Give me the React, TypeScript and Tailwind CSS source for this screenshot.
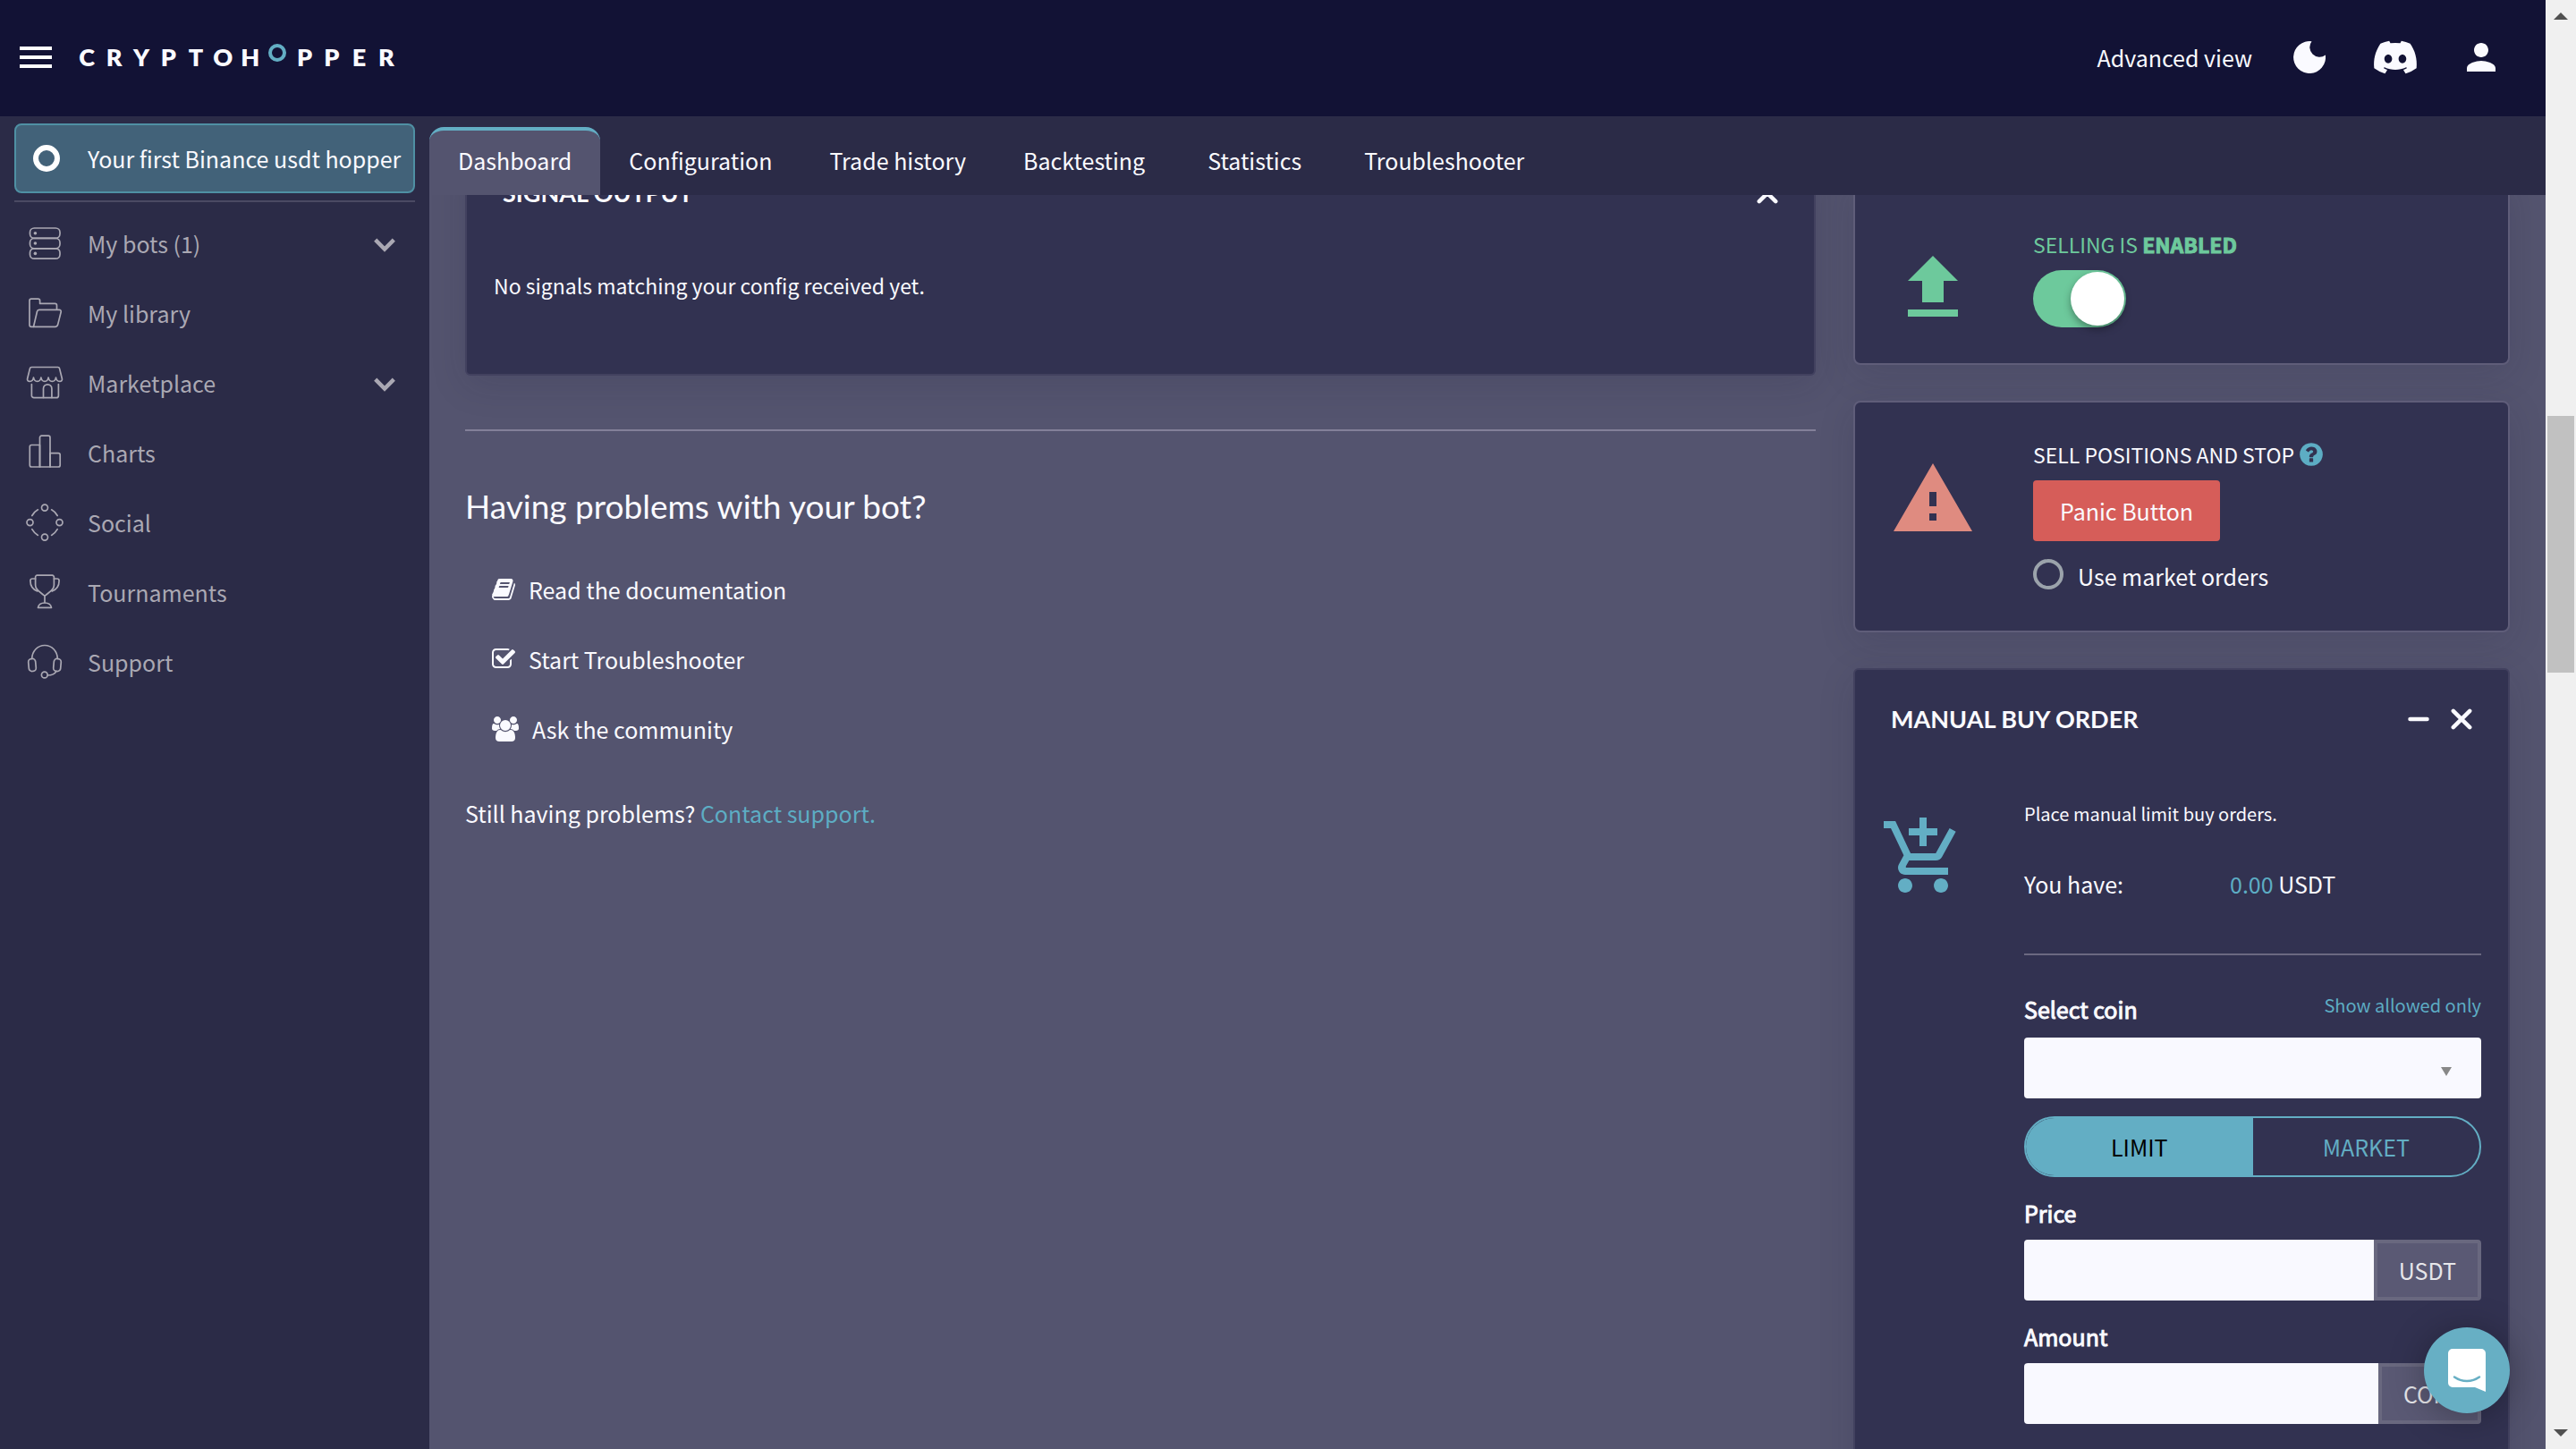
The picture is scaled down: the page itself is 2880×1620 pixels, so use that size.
import React, { useState } from "react";
import { MdPerson, MdFileUpload, MdWarning, MdAddShoppingCart } from "react-icons/md";
import { FaDiscord } from "react-icons/fa";

const line = {
  viewBox: "0 0 42 42",
  fill: "none",
  stroke: "currentColor",
  strokeWidth: 1.7,
  strokeLinecap: "round",
  strokeLinejoin: "round",
  className: "size-[42px] shrink-0",
  "aria-hidden": true,
} as const;

const BotsIcon = () => (
  <svg {...line}>
    <rect x="4.5" y="4" width="33.5" height="11.4" rx="4.8" />
    <rect x="4.5" y="15.4" width="33.5" height="11.4" rx="4.8" />
    <rect x="4.5" y="26.8" width="33.5" height="11.4" rx="4.8" />
    <g fill="currentColor" stroke="none">
      <circle cx="10.4" cy="9.7" r="1.8" />
      <circle cx="10.4" cy="21" r="1.8" />
      <circle cx="10.4" cy="32.4" r="1.8" />
    </g>
  </svg>
);
const LibraryIcon = () => (
  <svg {...line}>
    <path d="M8.5 36.3H6a2 2 0 0 1-2-2V7.2a2 2 0 0 1 2-2h7.6a2 2 0 0 1 2 2v3.2h16.9a2 2 0 0 1 2 2v4.8" />
    <path d="M8.5 36.3l4-17a2.4 2.4 0 0 1 2.3-2h22.4a2 2 0 0 1 2 2.5l-3.6 14.3a3 3 0 0 1-2.9 2.2H8.5z" />
  </svg>
);
const MarketIcon = () => (
  <svg {...line}>
    <path d="M6.4 3.5h29.2a2 2 0 0 1 2 1.6l2.8 11.4c.4 1.700-.9 2.900-2.600 2.900-2.600 0-4-1.600-4.300-4.400-.4 2.800-1.900 4.400-4.200 4.400s-3.800-1.600-4.200-4.400c-.4 2.800-1.800 4.400-4.100 4.400s-3.700-1.600-4.100-4.400c-.4 2.800-1.900 4.400-4.200 4.400s-3.800-1.600-4.200-4.400c-.3 2.800-1.700 4.400-4.300 4.400-1.700 0-3-1.200-2.600-2.900L4.400 5.100a2 2 0 0 1 2-1.600z" />
    <path d="M6.400 22.500v12.700a2.500 2.500 0 0 0 2.500 2.500h25a2.500 2.500 0 0 0 2.500-2.500V22.500" />
    <path d="M19.500 37.500V27.500a4.700 4.700 0 0 1 9.400 0v10" />
  </svg>
);
const ChartsIcon = () => (
  <svg {...line}>
    <path d="M15.500 37V12.500H6.300a2 2 0 0 0-2 2V35a2 2 0 0 0 2 2h9.200z" />
    <path d="M15.500 37V4.200a2 2 0 0 1 2-2H25a2 2 0 0 1 2 2V37H15.500z" />
    <path d="M27 37V21.700h9.200a2 2 0 0 1 2 2V35a2 2 0 0 1-2 2H27z" />
  </svg>
);
const SocialIcon = () => (
  <svg {...line}>
    <circle cx="21" cy="4.600" r="3.500" />
    <circle cx="21" cy="37.600" r="3.500" />
    <circle cx="4.500" cy="21.100" r="3.500" />
    <circle cx="37.500" cy="21.100" r="3.500" />
    <path d="M6.800 13.500a17 17 0 0 1 6.600-6.700M28.600 6.800a17 17 0 0 1 6.600 6.700M35.200 28.700a17 17 0 0 1-6.600 6.700M13.400 35.400a17 17 0 0 1-6.600-6.700" />
  </svg>
);
const TrophyIcon = () => (
  <svg {...line}>
    <path d="M12.600 2.200h16.800a2 2 0 0 1 2 2v9c0 5.400-5.600 8-9.200 11.100a1.800 1.800 0 0 1-2.400 0C16.200 21.200 10.600 18.600 10.600 13.200v-9a2 2 0 0 1 2-2z" />
    <path d="M10.600 6H7.200c-1.500 0-2.300.7-2.300 2.200 0 5.800 2.600 9.700 7.900 11.800M31.400 6h3.400c1.500 0 2.300.7 2.300 2.200 0 5.800-2.600 9.700-7.900 11.800M21 25v7.500" />
    <path d="M13.500 38.300h15c-.6-3.700-3.700-5.300-7.500-5.300s-6.900 1.600-7.500 5.300z" />
  </svg>
);
const HeadsetIcon = () => (
  <svg {...line}>
    <path d="M6.600 17.500C7 8.800 13 2.500 21 2.500s14 6.300 14.400 15" />
    <rect x="3" y="17.500" width="8" height="14" rx="3.500" transform="rotate(-5 7 24.500)" />
    <rect x="31" y="17.500" width="8" height="14" rx="3.500" transform="rotate(5 35 24.500)" />
    <circle cx="20.800" cy="35.500" r="3.400" />
    <path d="M24.200 36c5 0 8.300-1.800 10-4.600" />
  </svg>
);

const BookIcon = () => (
  <svg viewBox="0 0 1792 1792" fill="currentColor" className="size-7" aria-hidden>
    <path d="M1703 478q40 57 18 129l-275 906q-19 64-76.5 107.5t-122.5 43.5h-923q-77 0-148.5-53.5t-99.5-131.5q-24-67-2-127 0-4 3-27t4-37q1-8-3-21.5t-3-19.5q2-11 8-21t16.5-23.5 16.5-23.5q23-38 45-91.5t30-91.5q3-10 .5-30t-.5-28q3-11 17-28t17-23q21-36 42-92t25-90q1-9-2.500-32t.5-28q4-13 22-30.500t22-22.500q19-26 42.500-84.500t27.500-96.500q1-8-3-25.500t-2-26.500q2-8 9-18t18-23 17-21q8-12 16.500-30.500t15-35 16-36 19.500-32 26.500-23.500 36-11.500 47.500 5.500l-1 3q38-9 51-9h761q74 0 114 56t18 130l-274 906q-36 119-71.500 153.500t-128.500 34.500h-869q-27 0-38 15-11 16-1 43 24 70 144 70h923q29 0 56-15.500t35-41.500l300-987q7-22 5-57 38 15 59 43zm-1064 2q-4 13 2 22.500t20 9.500h608q13 0 25.500-9.500t16.500-22.500l21-64q4-13-2-22.500t-20-9.500h-608q-13 0-25.500 9.500t-16.500 22.500zm-83 256q-4 13 2 22.500t20 9.500h608q13 0 25.500-9.500t16.500-22.500l21-64q4-13-2-22.500t-20-9.500h-608q-13 0-25.500 9.500t-16.500 22.500z" />
  </svg>
);
const CheckIcon = () => (
  <svg viewBox="0 0 1792 1792" fill="currentColor" className="size-7" aria-hidden>
    <path d="M1472 930v318q0 119-84.500 203.500t-203.500 84.500h-832q-119 0-203.500-84.500t-84.500-203.500v-832q0-119 84.500-203.500t203.500-84.500h832q63 0 117 25 15 7 18 23 3 17-9 29l-49 49q-10 10-23 10-3 0-9-2-23-6-45-6h-832q-66 0-113 47t-47 113v832q0 66 47 113t113 47h832q66 0 113-47t47-113v-254q0-13 9-22l64-64q10-10 23-10 6 0 12 3 20 8 20 29zm231-489l-814 814q-24 24-57 24t-57-24l-430-430q-24-24-24-57t24-57l110-110q24-24 57-24t57 24l263 263 647-647q24-24 57-24t57 24l110 110q24 24 24 57t-24 57z" />
  </svg>
);
const UsersIcon = () => (
  <svg viewBox="0 0 1920 1792" fill="currentColor" className="h-7 w-8" aria-hidden>
    <path d="M593 896q-162 5-265 128h-134q-82 0-138-40.500t-56-118.500q0-353 124-353 6 0 43.500 21t97.500 42.500 119 21.500q67 0 133-23-5 37-5 66 0 139 81 256zm1071 637q0 120-73 189.500t-194 69.500h-874q-121 0-194-69.500t-73-189.500q0-53 3.500-103.500t14-109 26.500-108.500 43-97.500 62-81 85.500-53.500 111.500-20q10 0 43 21.500t73 48 107 48 135 21.500 135-21.500 107-48 73-48 43-21.500q61 0 111.500 20t85.500 53.500 62 81 43 97.500 26.500 108.500 14 109 3.500 103.500zm-1024-1277q0 106-75 181t-181 75-181-75-75-181 75-181 181-75 181 75 75 181zm704 384q0 159-112.500 271.500t-271.500 112.500-271.500-112.500-112.500-271.500 112.500-271.500 271.500-112.500 271.500 112.500 112.500 271.500zm576 225q0 78-56 118.500t-138 40.500h-134q-103-123-265-128 81-117 81-256 0-29-5-66 66 23 133 23 59 0 119-21.500t97.500-42.500 43.500-21q124 0 124 353zm-128-609q0 106-75 181t-181 75-181-75-75-181 75-181 181-75 181 75 75 181z" />
  </svg>
);
const HelpIcon = () => (
  <svg viewBox="0 0 1792 1792" fill="currentColor" className="size-[30px]" aria-hidden>
    <path d="M1024 1376v-192q0-14-9-23t-23-9h-192q-14 0-23 9t-9 23v192q0 14 9 23t23 9h192q14 0 23-9t9-23zm256-672q0-88-55.500-163t-138.500-116-170-41q-243 0-371 213-15 24 8 42l132 100q7 6 19 6 16 0 25-12 53-68 86-92 34-24 86-24 48 0 85.500 26t37.500 59q0 38-20 61t-68 45q-63 28-115.500 86.500t-52.500 125.500v36q0 14 9 23t23 9h192q14 0 23-9t9-23q0-19 21.500-49.500t54.500-49.500q32-18 49-28.500t46-35 44.500-48 28-60.500 12.500-81zm384 192q0 209-103 385.500t-279.500 279.500-385.500 103-385.500-103-279.500-279.500-103-385.500 103-385.500 279.500-279.500 385.500-103 385.500 103 279.500 279.500 103 385.500z" />
  </svg>
);
const Chevron = () => (
  <svg viewBox="0 0 24 16" fill="none" stroke="currentColor" strokeWidth="4.500" className="mt-1 mr-[22px] h-4 w-6" aria-hidden>
    <path d="M1.700 2.200 12 12.500 22.300 2.200" />
  </svg>
);
const CloseIcon = () => (
  <svg viewBox="0 0 24 24" stroke="currentColor" strokeWidth="4.500" strokeLinecap="round" className="size-6" aria-hidden>
    <path d="M2.800 2.800 21.200 21.200M21.200 2.800 2.800 21.200" />
  </svg>
);
const MinusIcon = () => (
  <svg viewBox="0 0 24 24" stroke="currentColor" strokeWidth="4.500" strokeLinecap="round" className="size-6" aria-hidden>
    <path d="M2.500 12H21.500" />
  </svg>
);
const MoonIcon = () => (
  <svg viewBox="0 0 36 36" fill="currentColor" className="size-9" aria-hidden>
    <path d="M20.500.2A11 11 0 0 0 35.900 15.600 18 18 0 1 1 20.500.2z" />
  </svg>
);

const nav = [
  { label: "My bots (1)", Icon: BotsIcon, more: true },
  { label: "My library", Icon: LibraryIcon },
  { label: "Marketplace", Icon: MarketIcon, more: true },
  { label: "Charts", Icon: ChartsIcon },
  { label: "Social", Icon: SocialIcon },
  { label: "Tournaments", Icon: TrophyIcon },
  { label: "Support", Icon: HeadsetIcon },
];
const tabs = ["Dashboard", "Configuration", "Trade history", "Backtesting", "Statistics", "Troubleshooter"];
const help = [
  { label: "Read the documentation", Icon: BookIcon },
  { label: "Start Troubleshooter", Icon: CheckIcon },
  { label: "Ask the community", Icon: UsersIcon },
];

function Logo() {
  return (
    <a href="#home" aria-label="Cryptohopper" className="grid w-[365px] grid-cols-12 items-center justify-items-center font-['Lato'] text-[27px] leading-9 font-extrabold">
      {"CRYPTOH".split("").map((c, i) => (
        <span key={i}>{c}</span>
      ))}
      <span className="mb-2.5 size-5 rounded-full border-4 border-[#63aec4]" />
      {"PPER".split("").map((c, i) => (
        <span key={i}>{c}</span>
      ))}
    </a>
  );
}

function Header() {
  return (
    <header className="flex h-[130px] shrink-0 items-center bg-[#121235] pr-12 pb-0.5 pl-[22px]">
      <button aria-label="Toggle menu" className="mr-6 flex w-9 flex-col gap-1.5">
        <span className="h-1 bg-white" />
        <span className="h-1 bg-white" />
        <span className="h-1 bg-white" />
      </button>
      <Logo />
      <a href="#advanced" className="ml-auto">Advanced view</a>
      <button aria-label="Dark mode" className="ml-[46px]"><MoonIcon /></button>
      <a href="#discord" aria-label="Discord" className="ml-[52px]"><FaDiscord className="size-[52px]" /></a>
      <button aria-label="Account" className="ml-[46px]"><MdPerson className="size-12" /></button>
    </header>
  );
}

function Sidebar() {
  return (
    <aside className="w-[480px] shrink-0 bg-[#2b2b47] px-4 pt-2">
      <button className="flex h-[78px] w-full items-center rounded-lg border-2 border-[#4f90a4] bg-[#426279] pl-[19px] whitespace-nowrap">
        <span className="mr-[31px] size-[30px] rounded-full border-[6px] border-white" />
        Your first Binance usdt hopper
      </button>
      <hr className="mt-2 border-t-2 border-[#4b4a63]" />
      <nav className="mt-[7px] text-[#aaa8b3]">
        {nav.map(({ label, Icon, more }) => (
          <a key={label} href={"#" + label} className="flex h-[78px] items-center pl-[13px]">
            <Icon />
            <span className="ml-[27px] flex-1">{label}</span>
            {more && <Chevron />}
          </a>
        ))}
      </nav>
    </aside>
  );
}

const card = "border-2 shadow-[0_10px_40px_rgba(30,30,60,0.14)] bg-[#323251]";
const bold = "[-webkit-text-stroke:1px_currentColor]";

function CardTitle({ children, minimise }: { children: string; minimise?: boolean }) {
  return (
    <div className="flex h-20 items-center px-10">
      <h3 className="flex-1 font-['Lato'] text-[27px] font-bold">{children}</h3>
      {minimise && <button aria-label="Minimise" className="mr-6"><MinusIcon /></button>}
      <button aria-label="Close"><CloseIcon /></button>
    </div>
  );
}

function MainColumn() {
  return (
    <section className="col-span-2">
      <div className={card + " -mt-11 rounded-md border-[#42415f]"}>
        <CardTitle>SIGNAL OUTPUT</CardTitle>
        <p className="mt-[43px] mb-[79px] px-[30px] text-[23px]">No signals matching your config received yet.</p>
      </div>
      <hr className="mt-[60px] border-t-2 border-[#838099]" />
      <h2 className="mt-[60px] font-['Lato'] text-[37px] leading-[48px]">Having problems with your bot?</h2>
      <ul className="mt-[30px] pl-[29px]">
        {help.map(({ label, Icon }) => (
          <li key={label}>
            <a href={"#" + label} className="flex h-[78px] items-center gap-[14px]">
              <Icon />
              {label}
            </a>
          </li>
        ))}
      </ul>
      <p className="mt-[35px]">
        Still having problems? <a href="#support" className="text-[#5dadc4]">Contact support.</a>
      </p>
    </section>
  );
}

function AmountField({ id, label, unit }: { id: string; label: string; unit: string }) {
  return (
    <div className="mt-5">
      <label htmlFor={id} className={"block " + bold}>{label}</label>
      <div className="mt-2.5 flex h-[68px]">
        <input id={id} type="text" className="min-w-0 flex-1 rounded-l bg-[#f9f9ff] px-4 text-[#323251]" />
        <span className="flex items-center rounded-r border-4 border-[#69687f] bg-[#5a5974] px-6 text-[#e6e6ea]">{unit}</span>
      </div>
    </div>
  );
}

function ManualBuy() {
  const [mode, setMode] = useState("LIMIT");
  return (
    <div className={card + " mt-10 rounded-md border-[#42415f] pt-[15px] pb-24"}>
      <CardTitle minimise>MANUAL BUY ORDER</CardTitle>
      <div className="mt-[50px] flex pr-[30px] pl-7">
        <MdAddShoppingCart className="mt-4 mr-[65px] size-24 shrink-0 text-[#63aec4]" />
        <div className="min-w-0 flex-1">
          <p className="text-[20px] leading-8">Place manual limit buy orders.</p>
          <dl className="mt-[42px] flex">
            <dt className="w-[230px]">You have:</dt>
            <dd><span className="text-[#5dadc4]">0.00</span> USDT</dd>
          </dl>
          <hr className="mt-[58px] border-t-2 border-[#6b6981]" />
          <div className="mt-10 flex items-start justify-between">
            <label htmlFor="coin" className={bold}>Select coin</label>
            <a href="#allowed" className="text-[20px] leading-8 text-[#5dadc4]">Show allowed only</a>
          </div>
          <div className="relative mt-3">
            <select id="coin" className="block h-[68px] w-full appearance-none rounded bg-[#f9f9ff] px-4 text-[#323251]">
              <option></option>
            </select>
            <svg viewBox="0 0 12 10" fill="#888" className="pointer-events-none absolute top-[33px] right-[33px] h-2.5 w-3" aria-hidden>
              <path d="M0 0h12L6 10z" />
            </svg>
          </div>
          <div className="mt-5 grid h-[68px] grid-cols-2 overflow-hidden rounded-full border-2 border-[#63aec4]">
            {["LIMIT", "MARKET"].map((m) => (
              <button key={m} aria-pressed={m === mode} onClick={() => setMode(m)} className={m === mode ? "bg-[#63aec4] text-black" : "text-[#63aec4]"}>
                {m}
              </button>
            ))}
          </div>
          <AmountField id="price" label="Price" unit="USDT" />
          <AmountField id="amount" label="Amount" unit="COIN" />
        </div>
      </div>
    </div>
  );
}

function SideColumn() {
  return (
    <section>
      <div className={card + " -mt-5 flex rounded-lg border-[#5f5d79] pt-[53px] pb-9 pl-[39px]"}>
        <MdFileUpload className="mt-[21px] mr-16 size-24 text-[#6dc99c]" />
        <div>
          <p id="selling" className="text-[23px] text-[#6dc99c]">
            SELLING IS <b className={bold}>ENABLED</b>
          </p>
          <input
            type="checkbox"
            role="switch"
            aria-labelledby="selling"
            defaultChecked
            className="mt-[9px] block h-16 w-[104px] appearance-none rounded-full bg-[#6dc99c] p-0.5 before:ml-10 before:block before:size-[60px] before:rounded-full before:bg-white before:shadow-[0_4px_8px_rgba(0,0,0,0.35)]"
          />
        </div>
      </div>
      <div className={card + " mt-10 flex rounded-lg border-[#5f5d79] pt-[38px] pb-[46px] pl-[39px]"}>
        <MdWarning className="mt-[22px] mr-16 size-24 text-[#df8b80]" />
        <div>
          <div className="flex items-center gap-1">
            <span className="text-[23px]">SELL POSITIONS AND STOP</span>
            <button aria-label="Help" className="text-[#5dadc4]"><HelpIcon /></button>
          </div>
          <button className="mt-[9px] h-[68px] rounded bg-[#d65d59] px-[30px]">Panic Button</button>
          <label className="mt-5 flex h-[34px] items-center">
            <input type="radio" className="mr-4 size-[34px] appearance-none rounded-full border-4 border-[#9ba3ab]" />
            <span className="mt-1">Use market orders</span>
          </label>
        </div>
      </div>
      <ManualBuy />
    </section>
  );
}

function Scrollbar() {
  return (
    <div aria-hidden className="flex w-[34px] shrink-0 flex-col items-center bg-[#f0f0f0]">
      <span className="flex h-9 items-center">
        <svg viewBox="0 0 16 8" fill="#505050" className="h-2 w-4"><path d="M8 0l8 8H0z" /></svg>
      </span>
      <span className="flex-[429]" />
      <span className="w-[30px] flex-[287] bg-[#c1c1c1]" />
      <span className="flex-[832]" />
      <span className="flex h-9 items-center">
        <svg viewBox="0 0 16 8" fill="#505050" className="h-2 w-4"><path d="M0 0h16L8 8z" /></svg>
      </span>
    </div>
  );
}

export default function App() {
  return (
    <div className="flex h-screen overflow-hidden bg-[#54546f] font-['Noto_Sans_CJK_SC',sans-serif] text-[25px] leading-10 text-[#fafaff]">
      <div className="flex min-w-0 flex-1 flex-col">
        <Header />
        <div className="flex min-h-0 flex-1">
          <Sidebar />
          <div className="flex min-w-0 flex-1 flex-col">
            <nav className="flex h-[88px] shrink-0 items-end bg-[#2b2b47]">
              {tabs.map((t, i) => (
                <a
                  key={t}
                  href={"#" + t}
                  className={
                    "flex h-[76px] items-center border-t-4 pb-1.5 " +
                    (t === "Statistics" ? "px-[38px] " : "px-8 ") +
                    (i === 0 ? "rounded-t-[16px] border-[#63aec4] bg-[#54546f]" : "border-transparent")
                  }
                >
                  {t}
                </a>
              ))}
            </nav>
            <main className="grid min-h-0 flex-1 grid-cols-3 items-start gap-[42px] overflow-hidden px-10">
              <MainColumn />
              <SideColumn />
            </main>
          </div>
        </div>
      </div>
      <Scrollbar />
      <button aria-label="Open chat" className="fixed right-[74px] bottom-10 flex size-24 items-center justify-center rounded-full bg-[#67afc4] shadow-[0_4px_40px_rgba(0,0,0,0.3)]">
        <svg viewBox="0 0 42 48" className="h-12 w-[42px]" aria-hidden>
          <path d="M5 0h32a5 5 0 0 1 5 5v43l-12-5H5a5 5 0 0 1-5-5V5a5 5 0 0 1 5-5z" fill="#fff" />
          <path d="M7 31.500c8.500 6 19.500 6 28 0" fill="none" stroke="#67afc4" strokeWidth="2.500" strokeLinecap="round" />
        </svg>
      </button>
    </div>
  );
}
